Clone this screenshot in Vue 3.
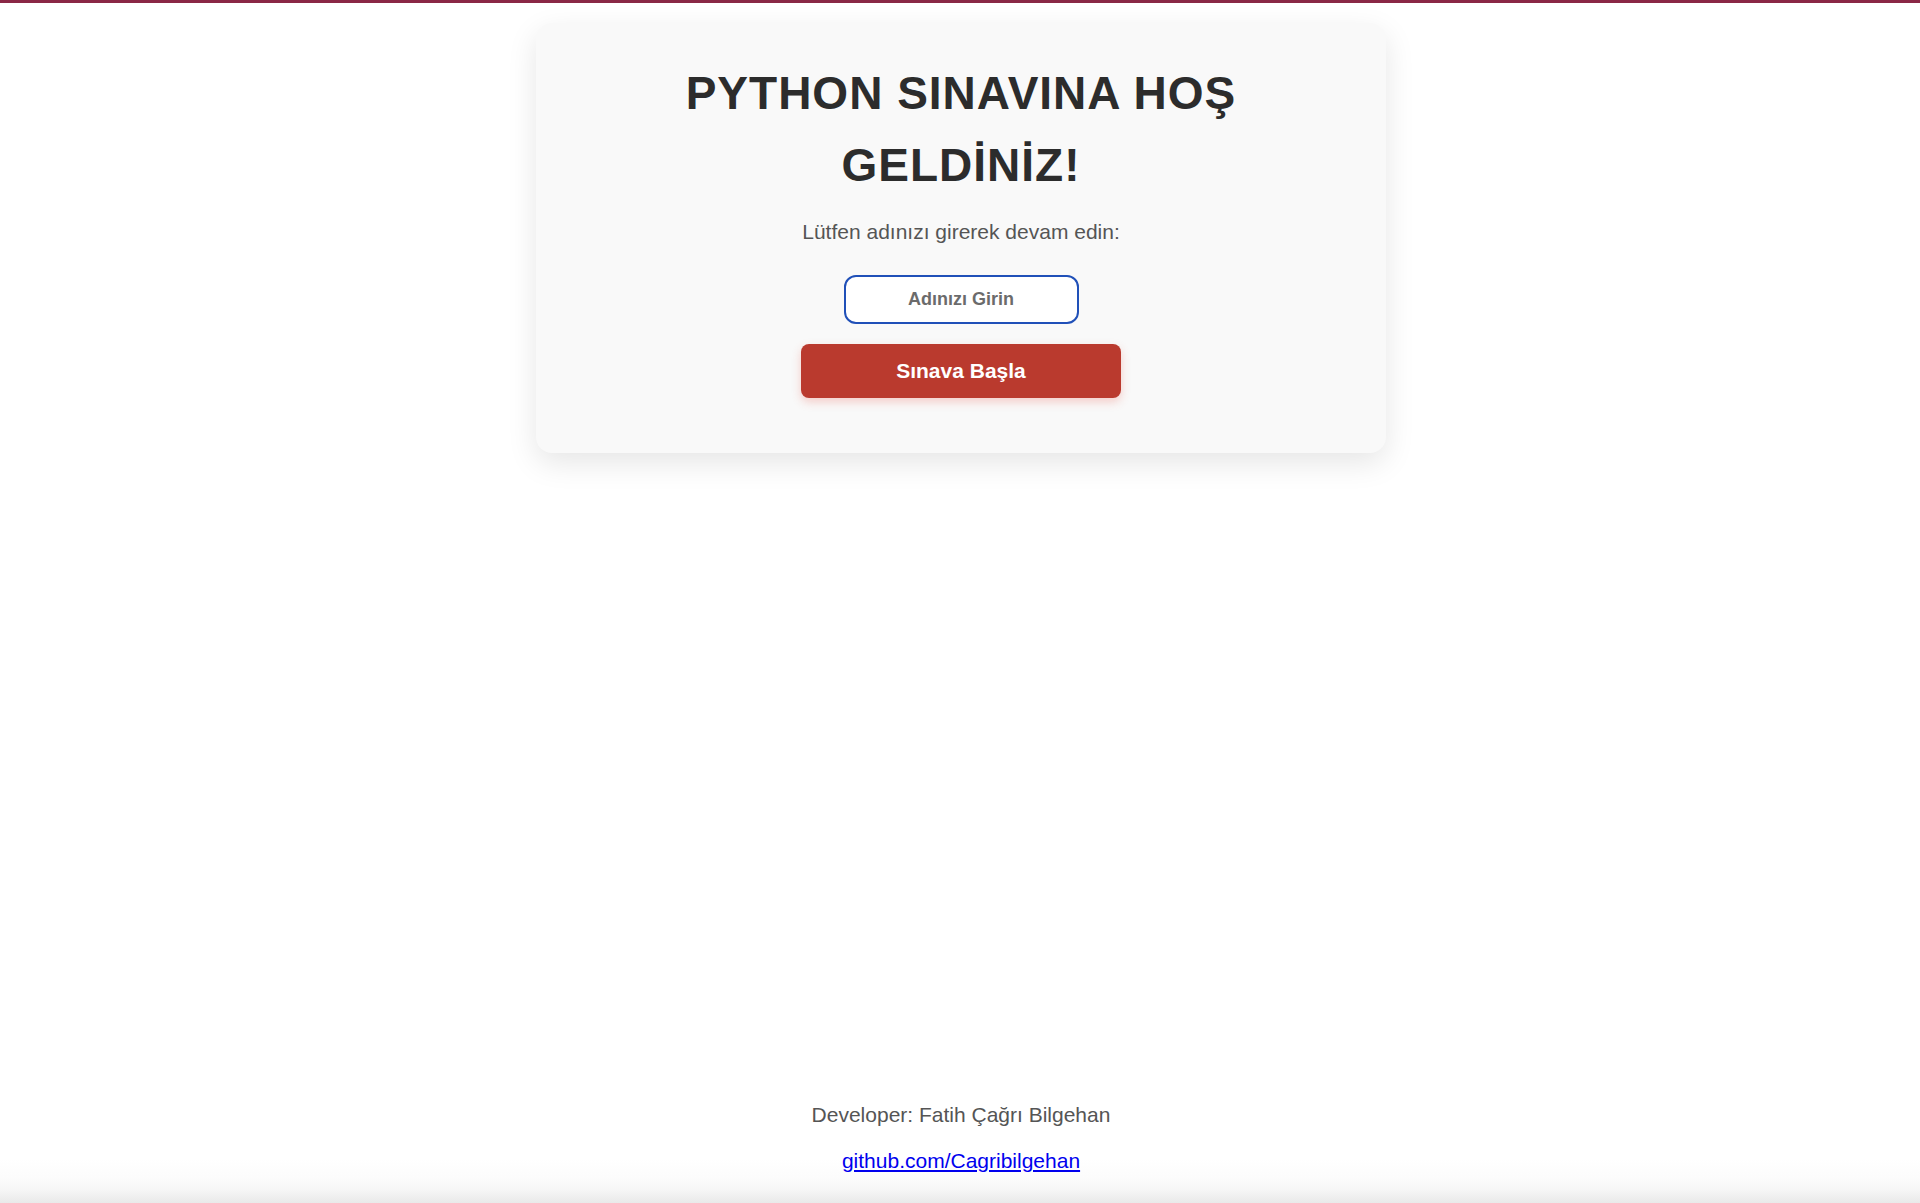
<script setup>
import { ref } from 'vue'

const name = ref('')
const started = ref(false)

function start() {
  started.value = name.value.trim() !== ''
}
</script>

<template>
  <div class="page">
    <main class="card">
      <h1 class="title">PYTHON SINAVINA HOŞ GELDİNİZ!</h1>
      <form class="form" @submit.prevent="start">
        <label class="hint" for="name">Lütfen adınızı girerek devam edin:</label>
        <input id="name" v-model="name" class="field" type="text" placeholder="Adınızı Girin" />
        <button class="submit" type="submit">Sınava Başla</button>
      </form>
    </main>
    <footer class="footer">
      <p class="credit">Developer: Fatih Çağrı Bilgehan</p>
      <a class="link" href="https://github.com/Cagribilgehan">github.com/Cagribilgehan</a>
    </footer>
  </div>
</template>

<style>
body {
  margin: 0;
  background: #fff;
}
</style>

<style scoped>
.page {
  box-sizing: border-box;
  min-height: 100vh;
  padding: 20px 20px 25px 22px;
  border-top: 3px solid #8a2846;
  display: flex;
  flex-direction: column;
  align-items: center;
  justify-content: space-between;
  gap: 40px;
  font-family: Helvetica, "Liberation Sans", Arial, sans-serif;
  font-size: 21px;
  line-height: 34px;
  color: #555;
  text-align: center;
  background: linear-gradient(to top, #e9e9e9, #f5f5f5 12px, #fcfcfc 26px, #fff 44px);
}

.card {
  box-sizing: border-box;
  width: 100%;
  max-width: 850px;
  padding: 34px 50px 55px;
  border-radius: 16px;
  background: #f9f9f9;
  box-shadow: 0 10px 30px rgba(0, 0, 0, 0.1);
}

.title {
  margin: 0 0 14px;
  font-size: 46px;
  line-height: 72px;
  letter-spacing: 1px;
  color: #2c2c2c;
}

.form {
  display: flex;
  flex-direction: column;
  align-items: center;
}

.hint {
  margin-bottom: 26px;
}

.field {
  box-sizing: border-box;
  width: 235px;
  height: 49px;
  margin-bottom: 20px;
  padding: 0 12px;
  border: 2px solid #2050b8;
  border-radius: 12px;
  background: #fff;
  font-family: inherit;
  font-size: 18px;
  font-weight: bold;
  text-align: center;
  color: #333;
}

.field::placeholder {
  color: #6b6b6b;
  opacity: 1;
}

.submit {
  width: 320px;
  max-width: 100%;
  height: 54px;
  border: 0;
  border-radius: 8px;
  background: #ba3a2e;
  box-shadow: 0 4px 10px rgba(231, 76, 60, 0.25);
  font-family: inherit;
  font-size: 21px;
  font-weight: bold;
  color: #fff;
  cursor: pointer;
}

.footer {
  display: flex;
  flex-direction: column;
  align-items: center;
  gap: 12px;
}

.credit {
  margin: 0;
}

.link {
  color: #0000ee;
}
</style>
